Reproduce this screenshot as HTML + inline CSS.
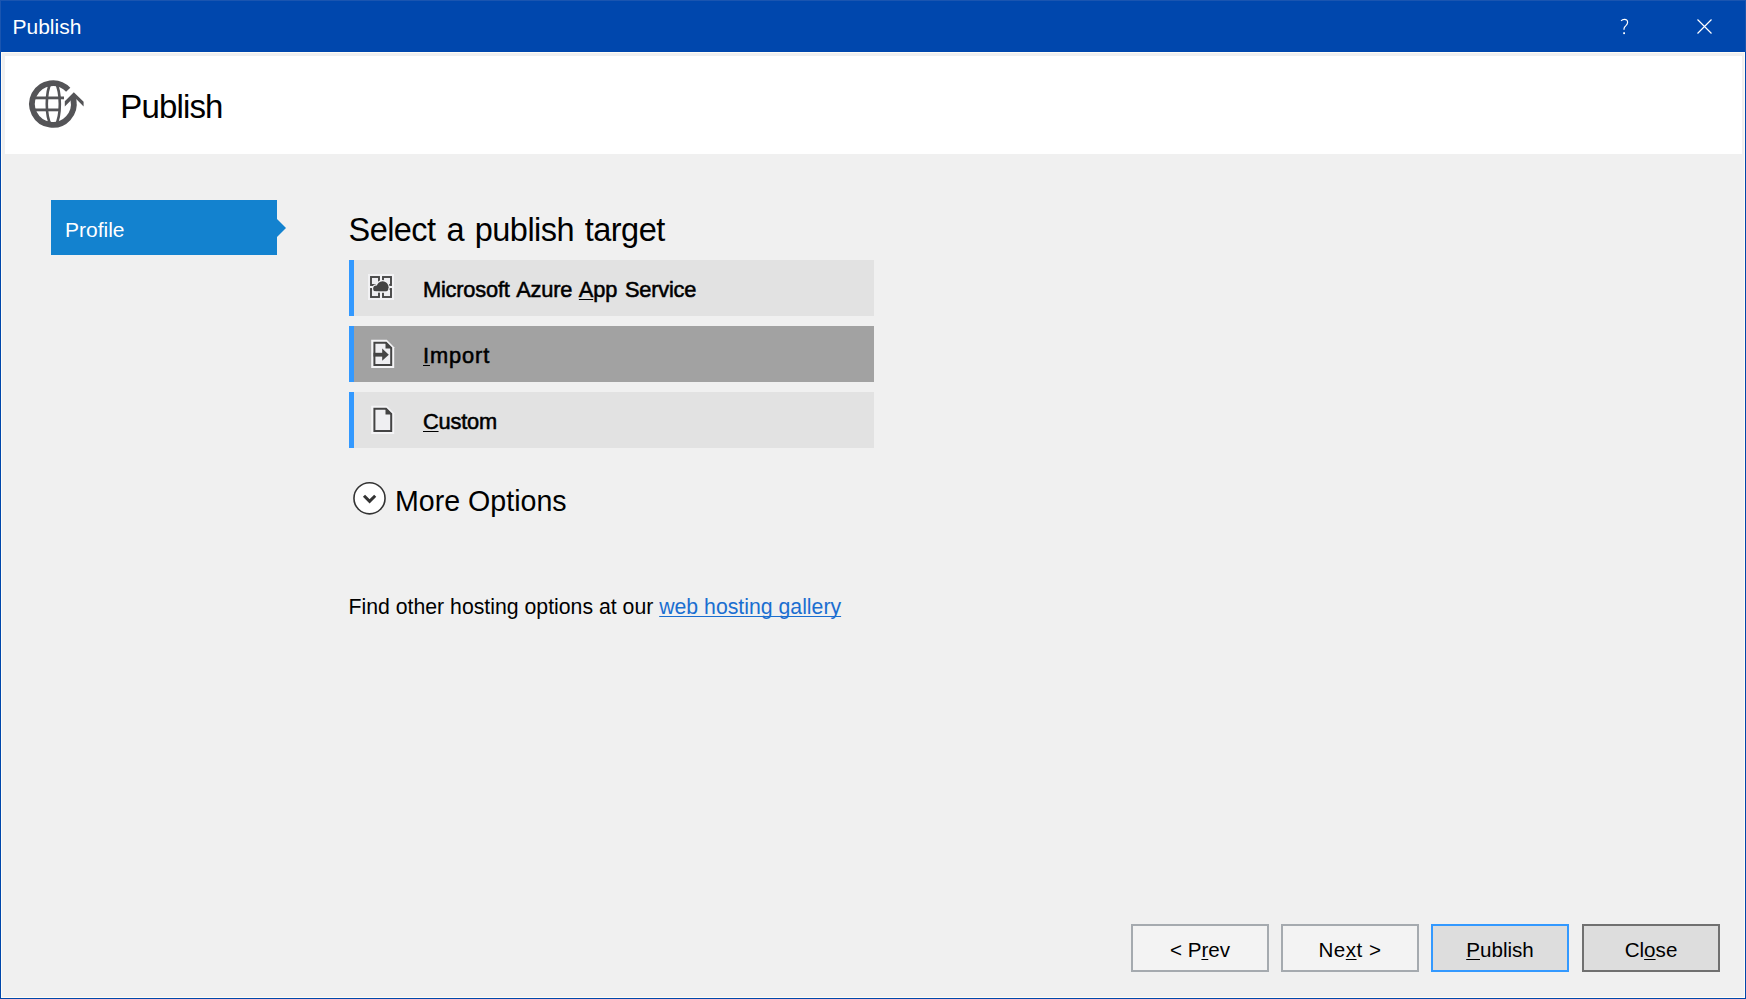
<!DOCTYPE html>
<html>
<head>
<meta charset="utf-8">
<style>
html,body{margin:0;padding:0;}
body{width:1746px;height:999px;position:relative;overflow:hidden;background:#0047AB;font-family:"Liberation Sans",sans-serif;}
.abs{position:absolute;}
#titlebar{left:0;top:0;width:1746px;height:52px;background:#0047AD;}
#titletext{left:12.5px;top:14.5px;font-size:21px;color:#fff;line-height:24px;white-space:nowrap;}
#frame{left:1px;top:52px;width:1744px;height:946px;background:#FFFCF5;}
#client{left:2px;top:53px;width:1742px;height:944px;background:#F0F0F0;}
#header{left:5px;top:56px;width:1737px;height:98px;background:#FFFFFF;}
#hdrtext{left:120.3px;top:86.8px;font-size:33px;letter-spacing:-0.85px;color:#000;line-height:40px;white-space:nowrap;}
#tab{left:51px;top:200px;width:226px;height:55px;background:#1382CF;}
#tabarrow{left:277px;top:219.4px;width:0;height:0;border-top:9.1px solid transparent;border-bottom:9.1px solid transparent;border-left:9.2px solid #1382CF;}
#tabtext{left:65px;top:217.5px;font-size:21px;color:#fff;line-height:24px;white-space:nowrap;}
#heading{left:348.5px;top:209.8px;font-size:32.5px;letter-spacing:-0.55px;word-spacing:2.4px;color:#000;line-height:40px;white-space:nowrap;}
.item{position:absolute;left:349px;width:525px;height:56px;background:#E2E2E2;}
.item .bar{position:absolute;left:0;top:0;width:5px;height:56px;background:#3399FF;}
.item .lbl{position:absolute;left:74px;top:17.5px;font-size:21.8px;word-spacing:2px;letter-spacing:-0.2px;font-weight:normal;-webkit-text-stroke:0.55px #000;color:#000;line-height:24px;white-space:nowrap;}
.item svg{position:absolute;left:19px;top:13px;}
u{text-decoration:underline;text-decoration-skip-ink:none;text-decoration-thickness:1.3px;text-underline-offset:2px;}
#more{left:395px;top:485px;font-size:28.6px;color:#000;line-height:32px;white-space:nowrap;}
#find{left:348.5px;top:593.7px;font-size:21.25px;color:#000;line-height:26px;white-space:nowrap;}
#find a{color:#1A6ED0;text-decoration:underline;text-decoration-skip-ink:none;text-decoration-thickness:1px;text-underline-offset:2px;}
.btn{position:absolute;top:924px;width:134px;height:44px;border:2px solid #A5AAAF;background:#F3F3F3;}
.btn span{position:absolute;left:0;right:0;top:11.5px;text-align:center;font-size:20.6px;line-height:24px;color:#000;white-space:nowrap;}
</style>
</head>
<body>
<div id="titlebar" class="abs"></div>
<div class="abs" style="left:0;top:0;width:1746px;height:1px;background:#1A55B0"></div>
<div class="abs" style="left:0;top:0;width:1px;height:52px;background:#1A55B0"></div>
<div class="abs" style="left:1745px;top:0;width:1px;height:52px;background:#1A55B0"></div>
<div id="titletext" class="abs">Publish</div>
<div id="frame" class="abs"></div>
<div id="client" class="abs"></div>
<div id="header" class="abs"></div>
<div id="hdrtext" class="abs">Publish</div>

<div id="tab" class="abs"></div>
<div id="tabarrow" class="abs"></div>
<div id="tabtext" class="abs">Profile</div>

<div id="heading" class="abs">Select a publish target</div>

<div class="item" style="top:260px"><div class="bar"></div><div class="lbl">Microsoft Azure <u>A</u>pp Service</div></div>
<div class="item" style="top:326px;background:#A2A2A2"><div class="bar"></div><div class="lbl" style="letter-spacing:0.9px"><u>I</u>mport</div></div>
<div class="item" style="top:392px"><div class="bar"></div><div class="lbl"><u>C</u>ustom</div></div>

<div id="more" class="abs">More Options</div>
<div id="find" class="abs">Find other hosting options at our <a>web hosting gallery</a></div>

<div class="btn" style="left:1131px"><span>&lt; P<u>r</u>ev</span></div>
<div class="btn" style="left:1281px"><span style="letter-spacing:0.5px">Ne<u>x</u>t &gt;</span></div>
<div class="btn" style="left:1431px;border-color:#3399FF;background:#DDDDDD"><span><u>P</u>ublish</span></div>
<div class="btn" style="left:1582px;border-color:#707070;background:#DDDDDD"><span>Cl<u>o</u>se</span></div>

<svg class="abs" style="left:1600px;top:0px" width="146" height="52" viewBox="1600 0 146 52">
 <path d="M1697.5 19.5 L1711.5 33.5 M1711.5 19.5 L1697.5 33.5" stroke="#fff" stroke-width="1.2" fill="none"/>
</svg>
<svg class="abs" style="left:1610px;top:10px" width="30" height="30" viewBox="1610 10 30 30">
 <path d="M1621.1 20.9 Q1622.4 19.3 1624.4 19.3 Q1627.6 19.3 1627.6 22.2 Q1627.6 24 1625.9 25.6 Q1624 27.3 1624 28.8 V29.8" stroke="#fff" stroke-width="1.2" fill="none"/>
 <rect x="1623.2" y="32.3" width="1.8" height="1.8" fill="#fff"/>
</svg>
<svg class="abs" style="left:20px;top:70px" width="80" height="70" viewBox="20 70 80 70">
 <g fill="none" stroke="#545457">
  <path d="M68.2 89.75 A20.9 20.9 0 1 0 73.34 99.65" stroke-width="5.8"/>
  <path d="M33 97.9 H64" stroke-width="2.8"/>
  <path d="M33 109.9 H60" stroke-width="2.8"/>
  <path d="M51.2 82 C45.3 92 45.3 116 51.2 126 M55.4 82 C61.3 92 61.3 116 55.4 126" stroke-width="2.6"/>
 </g>
 <path d="M64.8 101.2 L73.8 92.3 L83.6 101.8 V106.5 L76.2 99.1 V103 H71 V100.3 L64.8 106.5 Z" fill="#545457"/>
</svg>
<svg class="abs" style="left:360px;top:268px" width="40" height="40" viewBox="360 268 40 40">
 <defs><clipPath id="cc1"><rect x="360" y="268" width="40" height="24.4"/></clipPath><clipPath id="cc2"><rect x="360" y="268" width="40" height="23.2"/></clipPath></defs>
 <rect x="368" y="274" width="26" height="26" fill="#F2F2F4"/>
 <g fill="#EFEFF2" stroke="#474747" stroke-width="1.9">
  <rect x="371" y="277" width="8" height="8"/>
  <rect x="383" y="277" width="8" height="8"/>
  <rect x="371" y="289" width="8" height="8"/>
  <rect x="383" y="289" width="8" height="8"/>
 </g>
 <g fill="#F2F2F4" stroke="#F2F2F4" stroke-width="2.4" clip-path="url(#cc1)">
  <circle cx="382.6" cy="287.2" r="6"/><circle cx="376.4" cy="288.6" r="3.2"/>
  <rect x="373.6" y="288" width="14.5" height="3.2"/>
 </g>
 <g fill="#444" clip-path="url(#cc2)">
  <circle cx="382.6" cy="287.2" r="6"/><circle cx="376.4" cy="288.6" r="3.2"/>
  <rect x="376" y="288" width="10" height="3.2"/>
 </g>
</svg>
<svg class="abs" style="left:360px;top:334px" width="40" height="40" viewBox="360 334 40 40">
 <path d="M371.2 339.8 H386.8 L394.2 347.2 V368 H371.2 Z" fill="#F4F4F6"/>
 <path d="M374.4 342.8 H386 L391.2 348 V365 H374.4 Z" fill="#EFEFF2" stroke="#444" stroke-width="2"/>
 <path d="M385.5 342 V348.5 H392 Z" fill="#444"/>
 <path d="M373.5 354.7 H384" stroke="#444" stroke-width="3.8"/>
 <path d="M382.2 348.6 L388.8 354.7 L382.2 360.8 Z" fill="#444"/>
</svg>
<svg class="abs" style="left:360px;top:400px" width="40" height="40" viewBox="360 334 40 40">
 <path d="M371.2 339.8 H386.8 L394.2 347.2 V368 H371.2 Z" fill="#F4F4F6"/>
 <path d="M374.4 342.8 H386 L391.2 348 V365 H374.4 Z" fill="#EFEFF2" stroke="#444" stroke-width="2"/>
 <path d="M385.5 342 V348.5 H392 Z" fill="#444"/>
</svg>
<svg class="abs" style="left:348px;top:478px" width="44" height="42" viewBox="348 478 44 42">
 <circle cx="369.5" cy="498.3" r="15.55" fill="#fff" stroke="#333" stroke-width="1.6"/>
 <polyline points="364,495.8 369.6,501.4 375.2,495.8" fill="none" stroke="#333" stroke-width="3" stroke-linejoin="miter"/>
</svg>
</body>
</html>
